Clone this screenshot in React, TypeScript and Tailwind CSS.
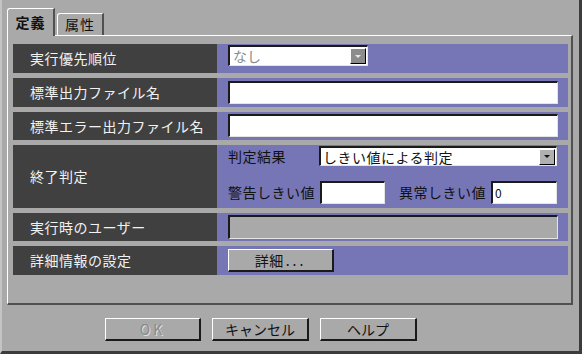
import React from 'react';

const font = { fontFamily: '"Noto Sans CJK JP", "Noto Sans", sans-serif' };

const Sunken: React.FC<{ className?: string; children?: React.ReactNode }> = ({ className = '', children }) => (
    <div className={`border-t-2 border-l-2 border-t-[#1a1a1a] border-l-[#1a1a1a] border-b border-r border-b-[#e4e4e4] border-r-[#e4e4e4] ${className}`}>
        {children}
    </div>
);

const Arrow: React.FC<{ disabled?: boolean }> = ({ disabled }) => (
    <div className={`w-[16px] h-[16px] flex items-center justify-center border-r border-b border-r-black border-b-black border-t border-l border-t-white border-l-white ${disabled ? 'bg-[#8c8c8c]' : 'bg-[#b0b0b0]'}`}>
        <svg width="8" height="5" viewBox="0 0 8 5">
            <path d="M1 1h6L4 4z" fill={disabled ? '#e8e8e8' : '#111'} />
        </svg>
    </div>
);

const Row: React.FC<{ label: string; h: string; children: React.ReactNode }> = ({ label, h, children }) => (
    <div className={`flex ${h}`}>
        <div className="w-[204px] bg-[#404040] text-[#f2f2f2] flex items-center pl-[17px] text-[14px] tracking-[0.5px]">{label}</div>
        <div className="w-[351px] bg-[#7676b6] pl-[11px]">{children}</div>
    </div>
);

const Btn: React.FC<{ children: React.ReactNode; disabled?: boolean; w: string }> = ({ children, disabled, w }) => (
    <div className={`${w} h-[23px] border-t border-l border-t-white border-l-white border-r-2 border-b-2 border-r-[#1a1a1a] border-b-[#1a1a1a] bg-[#a9a9a9] flex items-center justify-center text-[14px] ${disabled ? 'text-[#8a8a8a] [text-shadow:1px_1px_0_#e0e0e0]' : 'text-[#111]'}`}>
        {children}
    </div>
);

export default function App() {
    return (
        <div style={font} className="w-[582px] h-[354px] bg-[#a9a9a9] border-l-2 border-l-[#c4c4c4] border-r-[3px] border-r-[#3c3c3c] border-b-[3px] border-b-[#3c3c3c] flex flex-col">
            <div className="flex items-end pl-[5px] pt-[7px] h-[35px]">
                <div className="w-[48px] h-[28px] border-t border-l border-t-white border-l-white border-r-2 border-r-[#505050] rounded-tl-[3px] bg-[#a9a9a9] flex items-center justify-center text-[14px] font-bold text-[#111] tracking-[1px] relative z-10 -mb-px">
                    定義
                </div>
                <div className="w-[47px] h-[22px] ml-[2px] border-t border-l border-t-white border-l-white border-r-2 border-r-[#505050] rounded-tl-[3px] flex items-center justify-center text-[14px] text-[#111] tracking-[1px]">
                    属性
                </div>
            </div>
            <div className="ml-[5px] w-[566px] h-[270px] border-t border-l border-t-white border-l-white border-r-2 border-b-2 border-r-[#505050] border-b-[#505050] pl-[5px] pt-[8px] flex flex-col gap-[5px]">
                <Row label="実行優先順位" h="h-[29px]">
                    <Sunken className="mt-[1px] w-[140px] h-[21px] bg-white flex items-center justify-between pr-px">
                        <span className="pl-[3px] text-[14px] text-[#8a8a8a] leading-none">なし</span>
                        <Arrow disabled />
                    </Sunken>
                </Row>
                <Row label="標準出力ファイル名" h="h-[29px]">
                    <Sunken className="mt-[3px] w-[330px] h-[23px] bg-white" />
                </Row>
                <Row label="標準エラー出力ファイル名" h="h-[28px]">
                    <Sunken className="mt-[2px] w-[330px] h-[23px] bg-white" />
                </Row>
                <Row label="終了判定" h="h-[63px]">
                    <div className="flex items-center h-[20px] mt-[1px] text-[14px] text-[#111] tracking-[0.5px]">
                        <span className="w-[91px]">判定結果</span>
                        <Sunken className="w-[238px] h-[20px] bg-white flex items-center justify-between pr-px">
                            <span className="pl-[2px] leading-none tracking-[0.5px]">しきい値による判定</span>
                            <Arrow />
                        </Sunken>
                    </div>
                    <div className="flex items-center h-[23px] mt-[15px] text-[14px] text-[#111] tracking-[0.5px]">
                        <span className="w-[92px]">警告しきい値</span>
                        <Sunken className="w-[65px] h-[23px] bg-white" />
                        <span className="ml-[14px] w-[92px]">異常しきい値</span>
                        <Sunken className="w-[66px] h-[23px] bg-white flex items-center">
                            <span className="pl-[2px] text-[12px] leading-none">0</span>
                        </Sunken>
                    </div>
                </Row>
                <Row label="実行時のユーザー" h="h-[28px]">
                    <Sunken className="mt-[2px] w-[330px] h-[24px] bg-[#a9a9a9]" />
                </Row>
                <Row label="詳細情報の設定" h="h-[29px]">
                    <div className="pt-[3px]">
                        <Btn w="w-[106px]">
                            <span className="tracking-[0.5px]">詳細</span>
                            <span className="tracking-[3px] ml-[2px]">...</span>
                        </Btn>
                    </div>
                </Row>
            </div>
            <div className="flex gap-[11px] pl-[103px] pt-[13px]">
                <Btn w="w-[96px]" disabled>
                    <span className="tracking-[3px]">OK</span>
                </Btn>
                <Btn w="w-[97px]">キャンセル</Btn>
                <Btn w="w-[97px]">ヘルプ</Btn>
            </div>
        </div>
    );
}
